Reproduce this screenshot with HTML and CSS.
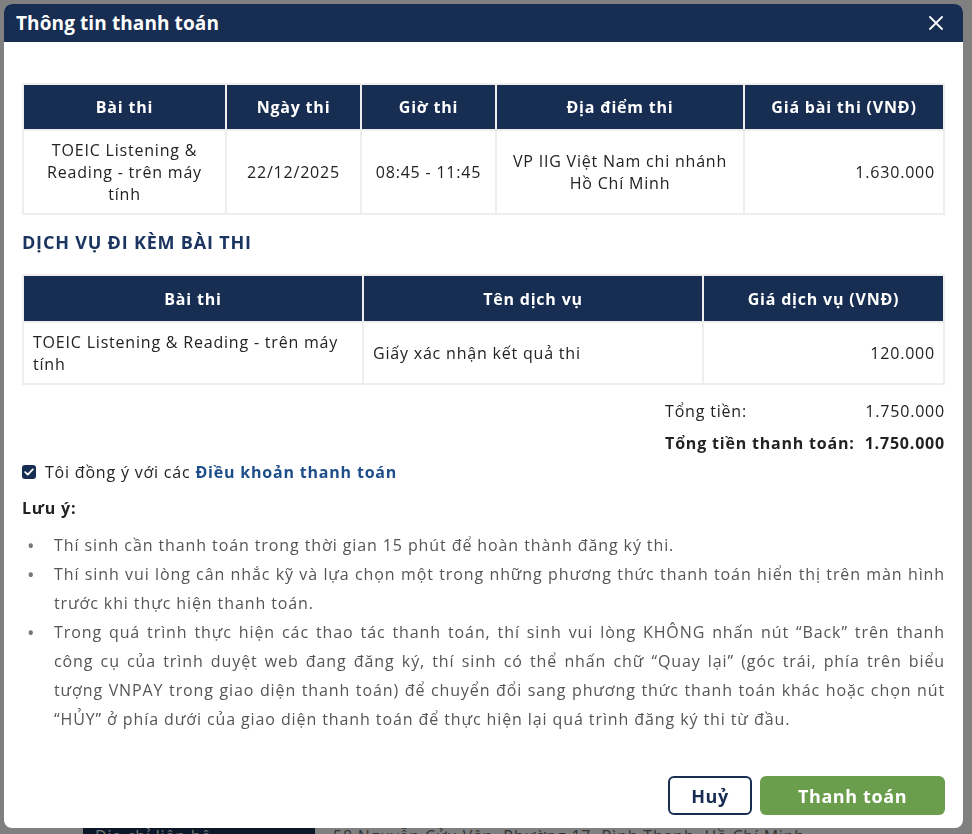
FILE: index.html
```html
<!DOCTYPE html>
<html lang="vi">
<head>
<meta charset="utf-8">
<title>Thông tin thanh toán</title>
<link rel="stylesheet" href="styles.css">
</head>
<body>
<div class="page">
  <div class="page-row">
    <div class="page-label">Địa chỉ liên hệ</div>
    <div class="page-text">58 Nguyễn Cửu Vân, Phường 17, Bình Thạnh, Hồ Chí Minh</div>
  </div>
</div>

<div class="modal">
  <div class="modal-header">
    <div class="modal-title">Thông tin thanh toán</div>
    <svg class="close" width="14" height="14" viewBox="0 0 14 14"><path d="M1 1L13 13M13 1L1 13" stroke="#fff" stroke-width="1.8" stroke-linecap="round"/></svg>
  </div>
  <div class="modal-body">
    <table class="tbl tbl-exam">
      <colgroup>
        <col style="width:203px"><col style="width:135px"><col style="width:135px"><col style="width:248px"><col>
      </colgroup>
      <thead>
        <tr><th>Bài thi</th><th>Ngày thi</th><th>Giờ thi</th><th>Địa điểm thi</th><th>Giá bài thi (VNĐ)</th></tr>
      </thead>
      <tbody>
        <tr>
          <td class="c">TOEIC Listening &amp; Reading - trên máy tính</td>
          <td class="c">22/12/2025</td>
          <td class="c">08:45 - 11:45</td>
          <td class="c">VP IIG Việt Nam chi nhánh Hồ Chí Minh</td>
          <td class="r">1.630.000</td>
        </tr>
      </tbody>
    </table>

    <h3 class="section-title">DỊCH VỤ ĐI KÈM BÀI THI</h3>

    <table class="tbl tbl-service">
      <colgroup>
        <col style="width:340px"><col style="width:340px"><col>
      </colgroup>
      <thead>
        <tr><th>Bài thi</th><th>Tên dịch vụ</th><th>Giá dịch vụ (VNĐ)</th></tr>
      </thead>
      <tbody>
        <tr>
          <td class="l">TOEIC Listening &amp; Reading - trên máy tính</td>
          <td class="l">Giấy xác nhận kết quả thi</td>
          <td class="r">120.000</td>
        </tr>
      </tbody>
    </table>

    <div class="totals">
      <div class="totals-grid">
        <span class="t-label">Tổng tiền:</span><span class="t-val">1.750.000</span>
        <span class="t-label strong">Tổng tiền thanh toán:</span><span class="t-val strong">1.750.000</span>
      </div>
    </div>

    <label class="agree">
      <span class="checkbox"><svg width="10" height="8" viewBox="0 0 10 8"><path d="M1.2 4.2L3.8 6.6L8.8 1.4" fill="none" stroke="#fff" stroke-width="1.8" stroke-linecap="round" stroke-linejoin="round"/></svg></span>
      <span>Tôi đồng ý với các <a class="link">Điều khoản thanh toán</a></span>
    </label>

    <div class="note-title">Lưu ý:</div>
    <ul class="notes">
      <li>Thí sinh cần thanh toán trong thời gian 15 phút để hoàn thành đăng ký thi.</li>
      <li>Thí sinh vui lòng cân nhắc kỹ và lựa chọn một trong những phương thức thanh toán hiển thị trên màn hình trước khi thực hiện thanh toán.</li>
      <li>Trong quá trình thực hiện các thao tác thanh toán, thí sinh vui lòng KHÔNG nhấn nút “Back” trên thanh công cụ của trình duyệt web đang đăng ký, thí sinh có thể nhấn chữ “Quay lại” (góc trái, phía trên biểu tượng VNPAY trong giao diện thanh toán) để chuyển đổi sang phương thức thanh toán khác hoặc chọn nút “HỦY” ở phía dưới của giao diện thanh toán để thực hiện lại quá trình đăng ký thi từ đầu.</li>
    </ul>
  </div>
  <div class="modal-footer">
    <button class="btn btn-outline">Huỷ</button>
    <button class="btn btn-primary">Thanh toán</button>
  </div>
</div>
</body>
</html>
```

FILE: styles.css
```css
html, body {
  margin: 0;
  padding: 0;
}
body {
  background: #808080;
  font-family: "Open Sans", "Noto Sans", sans-serif;
  letter-spacing: 0.8px;
  width: 972px;
  height: 834px;
  overflow: hidden;
}
.page {
  padding-top: 826px;
}
.page-row {
  display: flex;
  align-items: flex-start;
}
.page-label {
  margin-left: 83px;
  width: 232px;
  height: 20px;
  background: #0c1729;
  color: #777;
  font-size: 16px;
  line-height: 20px;
  padding-left: 12px;
  box-sizing: border-box;
}
.page-text {
  margin-left: 18px;
  color: #333;
  font-size: 16px;
  line-height: 20px;
}
.modal {
  position: fixed;
  left: 4px;
  top: 4px;
  width: 959px;
  height: 824px;
  background: #fff;
  border-radius: 8px;
  display: flex;
  flex-direction: column;
  overflow: hidden;
}
.modal-header {
  height: 38px;
  background: #172d52;
  display: flex;
  align-items: center;
  justify-content: space-between;
  padding: 0 20px 0 12px;
  flex-shrink: 0;
}
.modal-title {
  color: #fff;
  font-weight: 700;
  font-size: 19px;
  letter-spacing: 0.1px;
}
.close {
  display: block;
}
.modal-body {
  padding: 41px 18px 0 18px;
  flex: 1;
  color: #222;
  font-size: 16px;
}
.tbl {
  width: 923px;
  border-collapse: collapse;
  table-layout: fixed;
  font-size: 16px;
  border: 2px solid #eeeeee;
}
.tbl th {
  background: #172d52;
  color: #fff;
  font-weight: 700;
  height: 44px;
  padding: 0 8px;
  border: 2px solid #eeeeee;
  border-top: 0;
  text-align: center;
}
.tbl th:first-child { border-left: 0; }
.tbl th:last-child { border-right: 0; }
.tbl td {
  border: 2px solid #eeeeee;
  padding: 8px 8px;
  line-height: 22px;
  color: #222;
  vertical-align: middle;
}
.tbl-exam td { height: 66px; }
.tbl-exam td.c:first-child { padding: 8px 14px; }
.tbl-exam td:nth-child(4) { padding: 8px 6px; }
.tbl-service th { height: 45px; }
.tbl-service td { height: 44px; }
.tbl-service td.l { padding-left: 9px; }
.tbl td.c { text-align: center; }
.tbl td.r { text-align: right; }
.tbl td.l { text-align: left; }
.section-title {
  margin: 15px 0 20px 0;
  color: #1b3560;
  font-size: 18px;
  font-weight: 700;
  line-height: 24px;
}
.totals {
  display: flex;
  justify-content: flex-end;
  margin-top: 10px;
}
.totals-grid {
  display: grid;
  grid-template-columns: auto auto;
  column-gap: 10px;
  line-height: 32px;
  color: #222;
}
.t-val {
  text-align: right;
}
.strong {
  font-weight: 700;
}
.agree {
  display: flex;
  align-items: center;
  gap: 9px;
  margin-top: 0;
  line-height: 26px;
}
.checkbox {
  width: 14px;
  height: 14px;
  border-radius: 3px;
  background: #172d52;
  display: flex;
  align-items: center;
  justify-content: center;
}
.link {
  color: #1d4e89;
  font-weight: 700;
}
.note-title {
  margin-top: 10px;
  font-weight: 700;
  line-height: 26px;
}
.notes {
  margin: 10px 0 0 0;
  padding: 0 0 0 32px;
  color: #555;
  line-height: 29px;
  letter-spacing: 0.9px;
  text-align: justify;
  list-style: none;
}
.notes li {
  position: relative;
}
.notes li::before {
  content: "•";
  position: absolute;
  left: -27px;
  top: 0;
  color: #777;
  font-size: 20px;
}
.modal-footer {
  display: flex;
  justify-content: flex-end;
  gap: 8px;
  padding: 0 18px 13px 0;
}
.btn {
  height: 39px;
  border-radius: 6px;
  font-family: "Open Sans", "Noto Sans", sans-serif;
  font-weight: 700;
  font-size: 18px;
  letter-spacing: 0.6px;
  cursor: pointer;
}
.btn-outline {
  width: 84px;
  background: #fff;
  color: #172d52;
  border: 2px solid #172d52;
}
.btn-primary {
  width: 185px;
  background: #6a9d4c;
  color: #fff;
  border: 0;
}
```
